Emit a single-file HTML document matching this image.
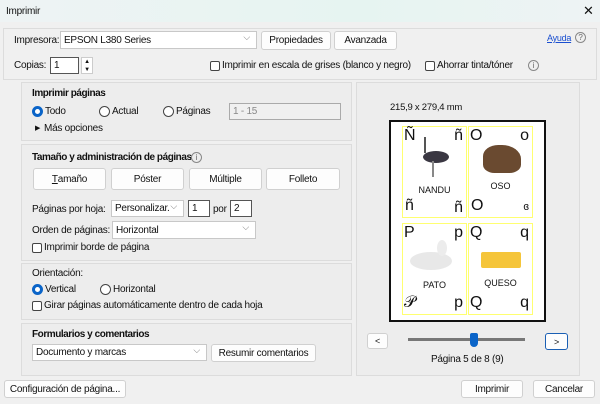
<!DOCTYPE html><html><head><meta charset="utf-8"><style>
*{box-sizing:border-box;margin:0;padding:0}
body{width:600px;height:404px;background:#f0f0f0;font-family:"Liberation Sans",sans-serif;font-size:10px;letter-spacing:-0.25px;color:#111;position:relative;overflow:hidden;white-space:nowrap}
.a{position:absolute}
.pan{position:absolute;background:#ededed;border:1px solid #dcdcdc}
.btn{position:absolute;background:#fdfdfd;border:1px solid #d0d0d0;border-radius:3px;text-align:center;font-size:10px;display:flex;align-items:center;justify-content:center}
.inp{position:absolute;background:#fff;border:1px solid #c8c8c8;font-size:10px;padding-left:3px;display:flex;align-items:center}
.chk{position:absolute;width:10px;height:10px;border:1px solid #444;border-radius:2px;background:#fff}
.rad{position:absolute;width:11px;height:11px;border:1px solid #444;border-radius:50%;background:#fff}
.rad.on{border:3px solid #0a64c8}
.dd::after{content:"⌵";position:absolute;right:6px;top:0;color:#777;font-size:9px}
b{font-weight:bold;letter-spacing:-0.45px}
.card{position:absolute;border:1px solid #ffff70;width:65px;height:92px;font-size:16px;letter-spacing:0}
.card span{position:absolute}
.lbl{font-size:9px;width:100%;text-align:center}
.ic{position:absolute;width:11px;height:11px;border:1px solid #888;border-radius:50%;font-size:8px;text-align:center;line-height:9px;color:#666}
</style></head><body>
<div class="a" style="left:0;top:0;width:600px;height:22px;background:linear-gradient(90deg,#eef3f4,#e6f4f1 60%,#eef3f4)"></div>
<div class="a" style="left:6px;top:6px">Imprimir</div>
<div class="a" style="left:583px;top:3px;font-size:13px">✕</div>
<div class="pan" style="left:3px;top:28px;width:594px;height:52px;background:#f0f0f0"></div>
<div class="a" style="left:14px;top:35px">Impresora:</div>
<div class="inp dd" style="left:60px;top:31px;width:197px;height:18px">EPSON L380 Series</div>
<div class="btn" style="left:261px;top:31px;width:70px;height:19px">Propiedades</div>
<div class="btn" style="left:334px;top:31px;width:63px;height:19px">Avanzada</div>
<div class="a" style="left:547px;top:33px;color:#1a4fd0;text-decoration:underline;font-size:9px">Ayuda</div>
<div class="ic" style="left:575px;top:32px">?</div>
<div class="a" style="left:14px;top:60px">Copias:</div>
<div class="inp" style="left:50px;top:57px;width:29px;height:17px;border-color:#555">1</div>
<div class="a" style="left:81px;top:57px;width:12px;height:17px;border:1px solid #ccc;background:#fff;font-size:6px;text-align:center;line-height:8px">▲<br>▼</div>
<div class="chk" style="left:210px;top:61px"></div>
<div class="a" style="left:222px;top:60px">Imprimir en escala de grises (blanco y negro)</div>
<div class="chk" style="left:425px;top:61px"></div>
<div class="a" style="left:437px;top:60px">Ahorrar tinta/tóner</div>
<div class="ic" style="left:528px;top:60px">i</div>

<div class="pan" style="left:21px;top:82px;width:331px;height:59px"></div>
<div class="a" style="left:32px;top:88px"><b>Imprimir páginas</b></div>
<div class="rad on" style="left:32px;top:106px"></div><div class="a" style="left:45px;top:106px">Todo</div>
<div class="rad" style="left:99px;top:106px"></div><div class="a" style="left:112px;top:106px">Actual</div>
<div class="rad" style="left:163px;top:106px"></div><div class="a" style="left:176px;top:106px">Páginas</div>
<div class="inp" style="left:229px;top:103px;width:112px;height:17px;background:#f0f0f0;color:#888;border-color:#aaa">1 - 15</div>
<div class="a" style="left:35px;top:124px;font-size:7px">▶</div><div class="a" style="left:44px;top:123px">Más opciones</div>

<div class="pan" style="left:21px;top:144px;width:331px;height:117px"></div>
<div class="a" style="left:32px;top:152px"><b>Tamaño y administración de páginas</b></div>
<div class="ic" style="left:191px;top:152px">i</div>
<div class="btn" style="left:33px;top:168px;width:73px;height:22px"><u>T</u>amaño</div>
<div class="btn" style="left:111px;top:168px;width:73px;height:22px">Póster</div>
<div class="btn" style="left:189px;top:168px;width:73px;height:22px">Múltiple</div>
<div class="btn" style="left:266px;top:168px;width:74px;height:22px">Folleto</div>
<div class="a" style="left:32px;top:204px">Páginas por hoja:</div>
<div class="inp dd" style="left:111px;top:200px;width:73px;height:17px">Personalizar.</div>
<div class="inp" style="left:188px;top:200px;width:22px;height:17px;border-color:#555">1</div>
<div class="a" style="left:213px;top:204px">por</div>
<div class="inp" style="left:230px;top:200px;width:22px;height:17px;border-color:#555">2</div>
<div class="a" style="left:32px;top:225px">Orden de páginas:</div>
<div class="inp dd" style="left:112px;top:221px;width:144px;height:18px">Horizontal</div>
<div class="chk" style="left:32px;top:243px"></div><div class="a" style="left:44px;top:242px">Imprimir borde de página</div>

<div class="pan" style="left:21px;top:263px;width:331px;height:57px"></div>
<div class="a" style="left:32px;top:268px">Orientación:</div>
<div class="rad on" style="left:32px;top:284px"></div><div class="a" style="left:45px;top:284px">Vertical</div>
<div class="rad" style="left:100px;top:284px"></div><div class="a" style="left:113px;top:284px">Horizontal</div>
<div class="chk" style="left:32px;top:301px"></div><div class="a" style="left:44px;top:300px">Girar páginas automáticamente dentro de cada hoja</div>

<div class="pan" style="left:21px;top:323px;width:331px;height:53px"></div>
<div class="a" style="left:32px;top:329px"><b>Formularios y comentarios</b></div>
<div class="inp dd" style="left:32px;top:344px;width:175px;height:17px">Documento y marcas</div>
<div class="btn" style="left:211px;top:344px;width:105px;height:18px">Resumir comentarios</div>

<div class="pan" style="left:356px;top:82px;width:224px;height:294px"></div>
<div class="a" style="left:390px;top:102px;font-size:9.5px">215,9 x 279,4 mm</div>
<div class="a" style="left:389px;top:120px;width:157px;height:202px;background:#fff;border:2px solid #111"></div>
<div class="card" style="left:402px;top:126px"><span style="left:1px;top:0">Ñ</span><span style="right:3px;top:0">ñ</span>
<div class="a" style="left:20px;top:24px;width:26px;height:12px;background:#3a3742;border-radius:50%"></div><div class="a" style="left:21px;top:10px;width:2px;height:16px;background:#555"></div><div class="a" style="left:29px;top:34px;width:2px;height:16px;background:#888"></div>
<div class="a lbl" style="top:58px">NANDU</div><span style="left:2px;top:70px">ñ</span><span style="right:3px;top:72px">ñ</span></div>
<div class="card" style="left:468px;top:126px"><span style="left:1px;top:0">O</span><span style="right:3px;top:0">o</span>
<div class="a" style="left:14px;top:18px;width:38px;height:28px;background:#6a4a30;border-radius:40% 50% 30% 30%"></div>
<div class="a lbl" style="top:54px">OSO</div><span style="left:2px;top:70px">O</span><span style="right:3px;top:74px;font-size:11px">ɞ</span></div>
<div class="card" style="left:402px;top:223px"><span style="left:1px;top:0">P</span><span style="right:3px;top:0">p</span>
<div class="a" style="left:7px;top:28px;width:42px;height:18px;background:#e8e8e8;border-radius:50%"></div><div class="a" style="left:34px;top:16px;width:10px;height:16px;background:#ececec;border-radius:50%"></div>
<div class="a lbl" style="top:56px">PATO</div><span style="left:1px;top:70px">𝒫</span><span style="right:3px;top:70px">p</span></div>
<div class="card" style="left:468px;top:223px"><span style="left:1px;top:0">Q</span><span style="right:3px;top:0">q</span>
<div class="a" style="left:12px;top:28px;width:40px;height:16px;background:#f5c53a;border-radius:2px"></div>
<div class="a lbl" style="top:54px">QUESO</div><span style="left:1px;top:70px">Q</span><span style="right:3px;top:70px">q</span></div>
<div class="btn" style="left:367px;top:333px;width:21px;height:16px;font-size:9px">&lt;</div>
<div class="btn" style="left:545px;top:333px;width:23px;height:17px;font-size:9px;border-color:#1a5fb4">&gt;</div>
<div class="a" style="left:408px;top:338px;width:117px;height:3px;background:#777"></div>
<div class="a" style="left:470px;top:333px;width:8px;height:14px;background:#0a64c8;border-radius:2px 2px 4px 4px"></div>
<div class="a" style="left:431px;top:354px">Página 5 de 8 (9)</div>

<div class="btn" style="left:4px;top:380px;width:122px;height:18px">Configuración de página...</div>
<div class="btn" style="left:461px;top:380px;width:62px;height:18px">Imprimir</div>
<div class="btn" style="left:533px;top:380px;width:62px;height:18px">Cancelar</div>
</body></html>
